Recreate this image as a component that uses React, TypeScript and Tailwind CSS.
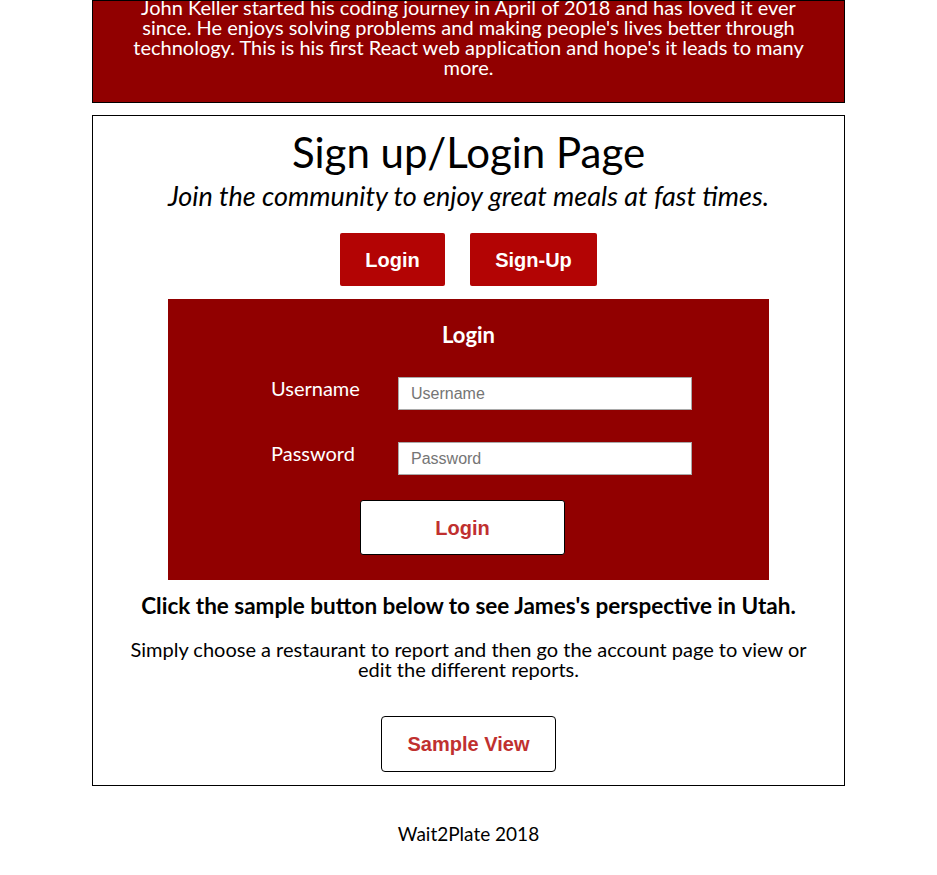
import React from 'react';

const sans = "font-['Lato','Open_Sans',sans-serif]";
const arial = "font-['Liberation_Sans',Arial,sans-serif]";

function AboutBox() {
  return (
    <div className={`mx-[92px] border border-black bg-[#910000] pb-[25px] text-center text-[20px] leading-[20px] text-white ${sans}`}>
      <p className="-mt-[4px] px-[30px]">
        John Keller started his coding journey in April of 2018 and has loved it ever since. He enjoys solving
        problems and making people's lives better through technology. This is his first React web application
        and hope's it leads to many more.
      </p>
    </div>
  );
}

function LoginForm() {
  return (
    <div className="mx-auto mt-[13px] w-[601px] bg-[#910000] pt-[22px] pb-[25px] text-white">
      <h3 className={`text-center text-[22px] font-bold leading-[28px] ${sans}`}>Login</h3>
      <div className="mt-[28px] flex flex-col gap-[32px]">
        {['Username', 'Password'].map((label) => (
          <div key={label} className="flex items-start">
            <label className={`ml-[103px] w-[127px] text-left text-[20px] leading-[22px] ${sans}`}>{label}</label>
            <input
              placeholder={label}
              type={label === 'Password' ? 'password' : 'text'}
              className={`h-[33px] w-[294px] border border-[#a9a9a9] bg-white px-[12px] text-[16px] text-black placeholder:text-[#757575] ${arial}`}
            />
          </div>
        ))}
      </div>
      <div className="mt-[25px] flex justify-center">
        <button className={`ml-[-12px] h-[55px] w-[205px] rounded-[3px] border border-black bg-white text-[20px] font-bold text-[#c0302f] ${arial}`}>
          Login
        </button>
      </div>
    </div>
  );
}

export default function App() {
  return (
    <div className="min-h-[875px] bg-white text-black">
      <AboutBox />
      <div className={`mx-[92px] mt-[12px] border border-black px-[30px] pt-[11px] pb-[13px] text-center ${sans}`}>
        <h1 className="text-[42px] leading-[50px]">Sign up/Login Page</h1>
        <p className="mt-[3px] text-[27px] italic leading-[32px]">Join the community to enjoy great meals at fast times.</p>
        <div className="mt-[21px] flex justify-center gap-[25px]">
          <button className={`h-[53px] w-[105px] rounded-[2px] bg-[#b30404] text-[20px] font-bold text-white ${arial}`}>Login</button>
          <button className={`h-[53px] w-[127px] rounded-[2px] bg-[#b30404] text-[20px] font-bold text-white ${arial}`}>Sign-Up</button>
        </div>
        <LoginForm />
        <p className="mt-[13px] text-[22.5px] font-bold leading-[26px]">
          Click the sample button below to see James's perspective in Utah.
        </p>
        <p className="mt-[20px] text-[20px] leading-[20px]">
          Simply choose a restaurant to report and then go the account page to view or edit the different reports.
        </p>
        <div className="mt-[37px] flex justify-center">
          <button className={`h-[56px] w-[175px] rounded-[4px] border border-black bg-white text-[20px] font-bold text-[#c0302f] ${arial}`}>
            Sample View
          </button>
        </div>
      </div>
      <footer className={`mt-[36px] text-center text-[19px] leading-[24px] ${sans}`}>Wait2Plate 2018</footer>
    </div>
  );
}
